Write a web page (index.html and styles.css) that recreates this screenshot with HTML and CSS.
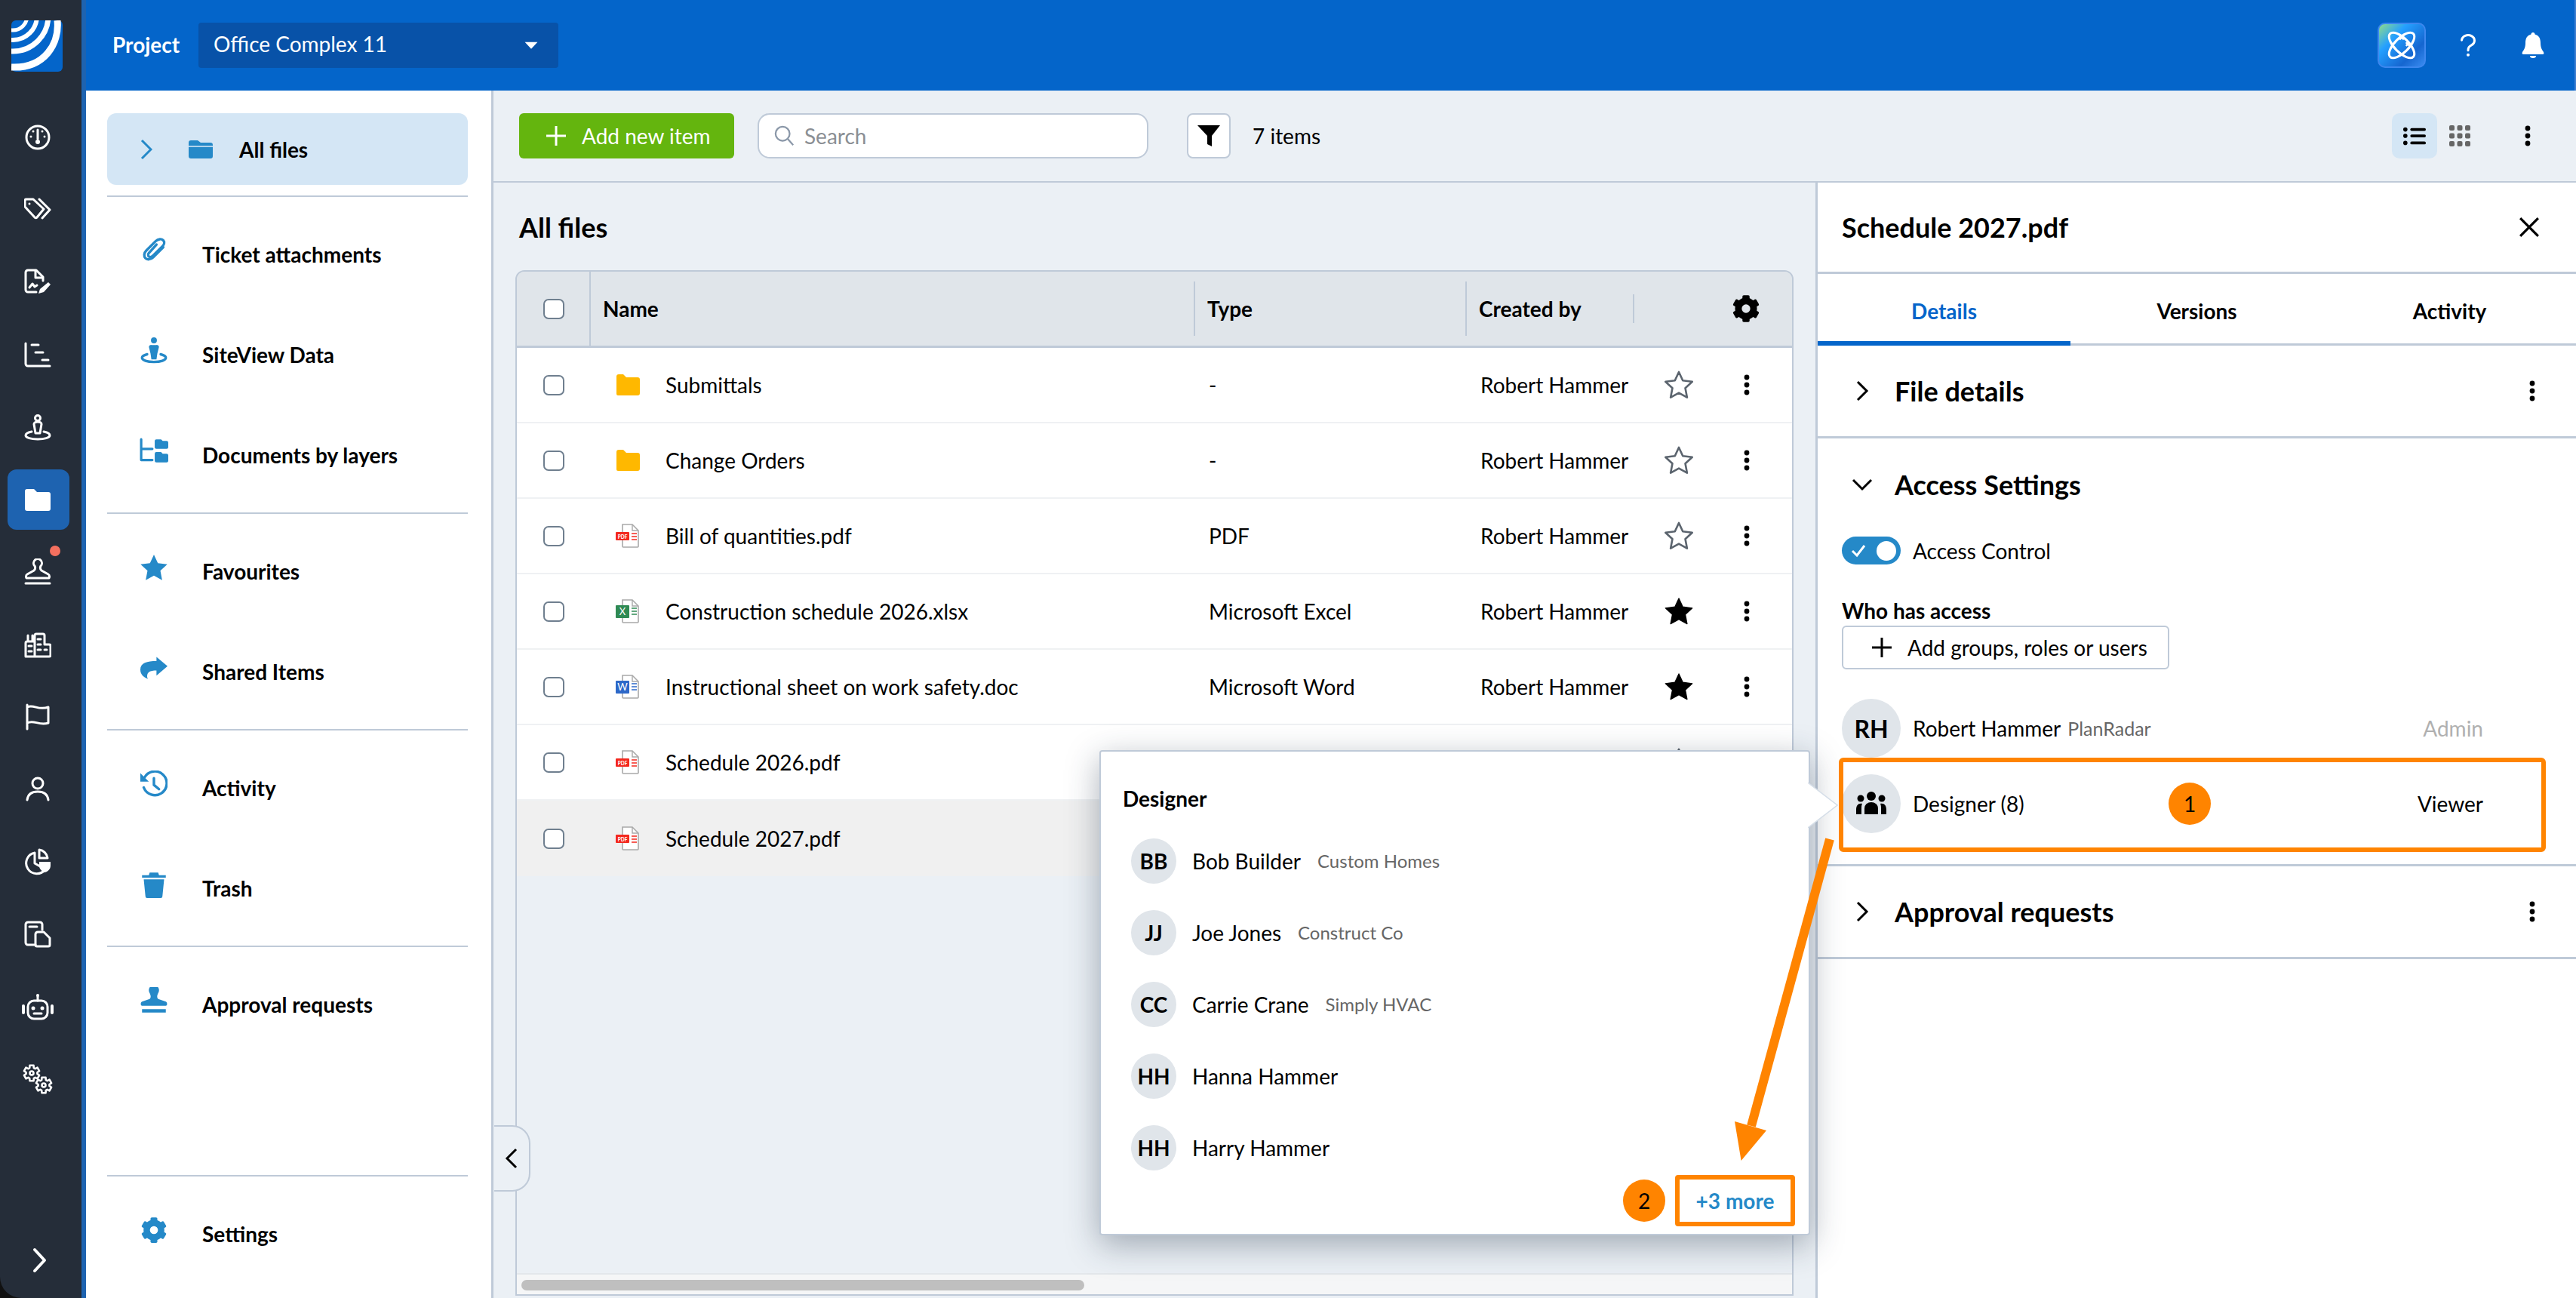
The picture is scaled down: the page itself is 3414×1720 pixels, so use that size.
FILE: index.html
```html
<!DOCTYPE html>
<html>
  <head>
    <title>All files</title>
    <meta name="viewport" content="width=device-width, initial-scale=1">
    <link rel="stylesheet" href="styles.css">
  </head>
  <body>
    <svg class="defs" width="0" height="0">
      <defs>
        <polygon id="gearline" points="-2.540,-10.190 2.540,-10.190 2.810,-6.950 4.620,-5.910 7.550,-7.290 10.090,-2.890 7.430,-1.040 7.430,1.040 10.090,2.890 7.550,7.290 4.620,5.910 2.810,6.950 2.540,10.190 -2.540,10.190 -2.810,6.950 -4.620,5.910 -7.550,7.290 -10.090,2.890 -7.430,1.040 -7.430,-1.040 -10.090,-2.890 -7.550,-7.290 -4.620,-5.910 -2.810,-6.950"/>
      </defs>
      <symbol id="star" viewBox="0 0 32 32"><polygon points="16,3 20,11.600 29.500,12.800 22.500,19.300 24.300,28.700 16,24.100 7.700,28.700 9.500,19.300 2.500,12.800 12,11.600" stroke-linejoin="round"/></symbol>
      <symbol id="kebab" viewBox="0 0 8 28"><circle cx="4" cy="4" r="3.400"/><circle cx="4" cy="14" r="3.400"/><circle cx="4" cy="24" r="3.400"/></symbol>
      <symbol id="folder" viewBox="0 0 32 28"><path d="M1 3a3 3 0 0 1 3-3h6l4 4h15a3 3 0 0 1 3 3v18a3 3 0 0 1-3 3H3a2 2 0 0 1-2-2z"/></symbol>
      <symbol id="page" viewBox="0 0 32 32"><path d="M9 1h13l8 8v21a1 1 0 0 1-1 1H10a1 1 0 0 1-1-1z" fill="#fff" stroke="#a9a9a9" stroke-width="1.600"/><path d="M22 1v8h8" fill="none" stroke="#a9a9a9" stroke-width="1.400"/></symbol>
      <symbol id="cog" viewBox="0 0 32 32">
        <circle cx="16" cy="16" r="8.500" fill="none" stroke="currentColor" stroke-width="7.500"/>
        <g fill="currentColor">
          <rect x="12" y="1" width="8" height="7" rx="1.500"/>
          <rect x="12" y="1" width="8" height="7" rx="1.500" transform="rotate(60 16 16)"/>
          <rect x="12" y="1" width="8" height="7" rx="1.500" transform="rotate(120 16 16)"/>
          <rect x="12" y="1" width="8" height="7" rx="1.500" transform="rotate(180 16 16)"/>
          <rect x="12" y="1" width="8" height="7" rx="1.500" transform="rotate(240 16 16)"/>
          <rect x="12" y="1" width="8" height="7" rx="1.500" transform="rotate(300 16 16)"/>
        </g>
      </symbol>
    </svg>

    <div class="app">
      <nav class="rail">
        <svg class="logo" viewBox="0 0 68 68">
          <rect width="68" height="68" rx="6" fill="#0465ca"/>
          <g fill="none" stroke="#fff">
            <circle cx="2" cy="-6" r="19" stroke-width="5"/>
            <circle cx="2" cy="-6" r="32" stroke-width="6"/>
            <circle cx="2" cy="-6" r="47" stroke-width="7"/>
            <path d="M61 0C64 30 45 64 0 62" stroke-width="9"/>
          </g>
        </svg>
        <div class="rail-list">
          <a class="rail-item"><svg viewBox="0 0 36 36"><circle cx="18" cy="18" r="15"/><path d="M18 8v12"/><circle cx="18" cy="24" r="3" class="fill"/><circle cx="9" cy="17" r="1.500" class="fill"/><circle cx="27" cy="17" r="1.500" class="fill"/><circle cx="12" cy="10" r="1.500" class="fill"/><circle cx="24" cy="10" r="1.500" class="fill"/></svg></a>
          <a class="rail-item"><svg viewBox="0 0 36 36"><path d="M1 6a2 2 0 0 1 2-2h9l14 13-9 11a2 2 0 0 1-3 0L2 15a3 3 0 0 1-1-2z"/><circle cx="7" cy="10" r="1.500" class="fill"/><path d="M20 4l14 14-10 11"/></svg></a>
          <a class="rail-item"><svg viewBox="0 0 36 36"><path d="M16 31H5a3 3 0 0 1-3-3V5a3 3 0 0 1 3-3h11l9 9v5"/><path d="M15 3v9h9"/><path d="M7 25l4-5 3 4 3-2"/><path d="M19 33l2-6 11-9 3 3-9 10z" class="fill"/></svg></a>
          <a class="rail-item"><svg viewBox="0 0 36 36"><path d="M2 3v27a3 3 0 0 0 3 3h29"/><path d="M10 5h9M15 15h10M24 25h8"/></svg></a>
          <a class="rail-item"><svg viewBox="0 0 36 36"><circle cx="18" cy="6" r="3.500"/><path d="M13 14a5 3 0 0 1 10 0l-2 12h-6z"/><path d="M10 24c-5 1-8 3-8 5 0 3 7 5 16 5s16-2 16-5c0-2-3-4-8-5"/></svg></a>
          <a class="rail-item active"><svg viewBox="0 0 36 36"><path class="fill" d="M1 7a3 3 0 0 1 3-3h9l4 4h15a3 3 0 0 1 3 3v19a3 3 0 0 1-3 3H4a3 3 0 0 1-3-3z"/></svg></a>
          <a class="rail-item has-dot"><svg viewBox="0 0 36 36"><path d="M13 16c2-2 2-4 1-6a5.500 5.500 0 1 1 8 0c-1 2-1 4 1 6l9 5c2 1 2 5 0 5H4c-2 0-2-4 0-5z"/><path d="M2 33h32"/></svg></a>
          <a class="rail-item"><svg viewBox="0 0 36 36"><path d="M2 34V16a2 2 0 0 1 2-2h10v20zM5 14V6M11 14V6M14 34V6a2 2 0 0 1 2-2h9a2 2 0 0 1 2 2v12h6a2 2 0 0 1 2 2v12a2 2 0 0 1-2 2z"/><path d="M6 20h4M6 27h4M18 11h4M18 18h4M18 25h4M27 25h3"/></svg></a>
          <a class="rail-item"><svg viewBox="0 0 36 36"><path d="M4 2v32M4 5c9-4 15 5 28 0v21c-13 4-19-5-28 0"/></svg></a>
          <a class="rail-item"><svg viewBox="0 0 36 36"><circle cx="18" cy="10" r="7"/><path d="M4 32c1-8 7-11 14-11s13 3 14 11"/></svg></a>
          <a class="rail-item"><svg viewBox="0 0 36 36"><path d="M14 6a14 14 0 1 0 14 22L14 20z"/><path d="M20 2a13 13 0 0 1 11 11H20z"/><path class="fill" d="M20 18h15v5c0 5-4 8-7.500 9-3.500-1-7.500-4-7.500-9z"/></svg></a>
          <a class="rail-item"><svg viewBox="0 0 36 36"><path d="M15 32H5a3 3 0 0 1-3-3V5a3 3 0 0 1 3-3h16a3 3 0 0 1 3 3v7"/><path d="M7 8h10"/><path d="M15 18a3 3 0 0 1 3-3h8l8 8v9a2 2 0 0 1-2 2H17a2 2 0 0 1-2-2z"/></svg></a>
          <a class="rail-item wide"><svg viewBox="0 0 44 36"><rect x="9" y="10" width="26" height="24" rx="8"/><path d="M22 4v6"/><circle cx="22" cy="3" r="2" class="fill"/><path d="M3 17v9M41 17v9" stroke-width="4"/><circle cx="16" cy="20" r="2.500" class="fill"/><circle cx="28" cy="20" r="2.500" class="fill"/><path d="M17 27h10"/></svg></a>
          <a class="rail-item gears"><svg viewBox="0 0 40 40"><use href="#gearline" transform="translate(12 12)"/><circle cx="12" cy="12" r="2.500"/><use href="#gearline" transform="translate(28 28)"/><circle cx="28" cy="28" r="2.500"/></svg></a>
          <a class="rail-item rail-expand"><svg viewBox="0 0 36 36"><path d="M11 4l13 14-13 14" stroke-width="4"/></svg></a>
        </div>
      </nav>

      <div class="workspace">
        <header class="topbar">
          <span class="project-label">Project</span>
          <div class="project-select">
            <span>Office Complex 11</span>
            <svg class="caret" viewBox="0 0 16 10"><path d="M1 1.500h14L8 9z"/></svg>
          </div>
          <div class="top-actions">
            <a class="ai-btn">
              <svg viewBox="0 0 36 36" fill="none" stroke="#fff" stroke-width="3.200">
                <ellipse cx="18" cy="18" rx="23" ry="10" transform="rotate(45 18 18)"/>
                <ellipse cx="18" cy="18" rx="23" ry="10" transform="rotate(-45 18 18)"/>
                <path d="M15 4l6 6M21 4l-6 6M24 14l5 5M29 14l-5 5" stroke-width="2.600"/>
              </svg>
            </a>
            <svg class="help" viewBox="0 0 26 36" fill="none" stroke="#fff" stroke-width="3.600" stroke-linecap="round"><path d="M3 10a10 8.500 0 1 1 15 8c-3 2-5 3-5 8"/><circle cx="13" cy="33" r="2.400" fill="#fff" stroke="none"/></svg>
            <svg class="bell" viewBox="0 0 30 34" fill="#fff"><path d="M15 0a2.500 2.500 0 0 1 2.500 2.500C23 4 25 8 25 14c0 6 2 9 4 12 1 2 0 3-1 3H2c-1 0-2-1-1-3 2-3 4-6 4-12C5 8 7 4 12.500 2.500A2.500 2.500 0 0 1 15 0z"/><path d="M11 31h8a4 3 0 0 1-8 0z"/></svg>
          </div>
        </header>

        <div class="below-top">
          <aside class="sidebar">
            <a class="side-item current">
              <svg class="side-chevron" viewBox="0 0 16 28"><path d="M2 2l12 12L2 26"/></svg>
              <svg class="side-folder" viewBox="0 0 32 24"><path d="M0 3a3 3 0 0 1 3-3h9l4 3h13a3 3 0 0 1 3 3v15a3 3 0 0 1-3 3H3a3 3 0 0 1-3-3z"/><path d="M0 8h32" stroke="#d4e6f5" stroke-width="1.600"/></svg>
              <span>All files</span>
            </a>
            <hr>
            <a class="side-item"><span class="side-icon"><svg viewBox="0 0 32 32"><path class="line" d="M27 12L15 24c-3 3-7 3-9 1s-2-6 1-9L18 5c3-3 7-3 9-1s1 5-1 7L15 22c-2 2-4 2-5 1s-1-3 0-4l9-10"/></svg></span><span>Ticket attachments</span></a>
            <a class="side-item"><span class="side-icon"><svg viewBox="0 0 32 32"><circle cx="16" cy="3.500" r="3.500"/><path d="M10 11a3 3 0 0 1 3-2h6a3 3 0 0 1 3 2l-2 8-1 7h-6l-1-7z"/><path class="line" d="M8 20c-4 1-6 2-6 4 0 3 6 5 14 5s14-2 14-5c0-2-2-3-6-4" stroke-width="2.400"/></svg></span><span>SiteView Data</span></a>
            <a class="side-item"><span class="side-icon docs"><svg viewBox="0 0 36 32"><path class="line" d="M2 1v26h14M2 13h14"/><path d="M19 3a2 2 0 0 1 2-2h6l2 2h5a2 2 0 0 1 2 2v6a2 2 0 0 1-2 2H21a2 2 0 0 1-2-2zM19 19a2 2 0 0 1 2-2h6l2 2h5a2 2 0 0 1 2 2v7a2 2 0 0 1-2 2H21a2 2 0 0 1-2-2z"/></svg></span><span>Documents by layers</span></a>
            <hr>
            <a class="side-item"><span class="side-icon star"><svg viewBox="0 0 32 32"><use href="#star"/></svg></span><span>Favourites</span></a>
            <a class="side-item"><span class="side-icon"><svg viewBox="0 0 32 32"><path d="M19 3l13 11-13 11v-6c-8 0-11 2-11 7 0 2 1 3 1 3-5-2-9-5-9-11 0-8 8-10 19-10z"/></svg></span><span>Shared Items</span></a>
            <hr>
            <a class="side-item"><span class="side-icon"><svg viewBox="0 0 32 32"><path class="line" d="M5 8a14 14 0 1 1-1 12" stroke-width="3.400"/><path d="M0 3l10 10H0z"/><path class="line" d="M16 9v8l6 5" stroke-width="3"/></svg></span><span>Activity</span></a>
            <a class="side-item"><span class="side-icon"><svg viewBox="0 0 32 32"><path d="M2 5h8l1-3h10l1 3h8v3H2zM4 10h24l-2 20a2 2 0 0 1-2 2H8a2 2 0 0 1-2-2z"/></svg></span><span>Trash</span></a>
            <hr>
            <a class="side-item"><span class="side-icon"><svg viewBox="0 0 32 32"><path d="M11 14c2-2 1-5 0-7a6 6 0 1 1 10 0c-1 2-2 5 0 7l9 3c2 1 2 5 0 5H2c-2 0-2-4 0-5z"/><rect x="2" y="26" width="28" height="4"/></svg></span><span>Approval requests</span></a>
            <hr class="push">
            <a class="side-item"><span class="side-icon"><svg class="blue-cog" viewBox="0 0 32 32"><use href="#cog"/></svg></span><span>Settings</span></a>
          </aside>

          <main class="main">
            <div class="toolbar">
              <button class="add-btn"><svg viewBox="0 0 28 28"><path d="M14 1v26M1 14h26"/></svg>Add new item</button>
              <div class="search">
                <svg viewBox="0 0 30 30"><circle cx="12" cy="12" r="10"/><path d="M19 19l8 9"/></svg>
                <span>Search</span>
              </div>
              <button class="filter-btn"><svg viewBox="0 0 32 32"><path d="M1 2h30L20 16v14l-6-3V16z"/></svg></button>
              <span class="count">7 items</span>
              <div class="view-btns">
                <a class="view-btn on"><svg viewBox="0 0 32 24"><g fill="#000"><circle cx="3" cy="3" r="3"/><circle cx="3" cy="12" r="3"/><circle cx="3" cy="22" r="3"/><rect x="10" y="1" width="22" height="4" rx="2"/><rect x="10" y="10" width="22" height="4" rx="2"/><rect x="10" y="20" width="22" height="4" rx="2"/></g></svg></a>
                <a class="view-btn"><svg viewBox="0 0 28 28"><g fill="#666"><rect width="7" height="7" rx="2"/><rect x="10.500" width="7" height="7" rx="2"/><rect x="21" width="7" height="7" rx="2"/><rect y="10.500" width="7" height="7" rx="2"/><rect x="10.500" y="10.500" width="7" height="7" rx="2"/><rect x="21" y="10.500" width="7" height="7" rx="2"/><rect y="21" width="7" height="7" rx="2"/><rect x="10.500" y="21" width="7" height="7" rx="2"/><rect x="21" y="21" width="7" height="7" rx="2"/></g></svg></a>
                <a class="view-btn more"><svg class="kebab" viewBox="0 0 8 28"><use href="#kebab"/></svg></a>
              </div>
            </div>

            <div class="content">
              <section class="files">
                <h1>All files</h1>
                <div class="table">
                  <div class="row head">
                    <div class="th-check"><span class="check"></span></div>
                    <div class="th">Name</div>
                    <div class="th ruled">Type</div>
                    <div class="th ruled">Created by</div>
                    <div class="th ruled cog-cell"><svg class="head-cog" viewBox="0 0 32 32"><use href="#cog"/></svg></div>
                  </div>

                  <div class="row">
                    <div class="td-check"><span class="check"></span></div>
                    <div class="td name"><svg class="ficon" viewBox="0 0 32 28"><use href="#folder" fill="#ffb800"/></svg>Submittals</div>
                    <div class="td">-</div>
                    <div class="td">Robert Hammer</div>
                    <div class="td-star"><svg class="star-off" viewBox="0 0 32 32"><use href="#star"/></svg></div>
                    <div class="td-more"><svg class="kebab" viewBox="0 0 8 28"><use href="#kebab"/></svg></div>
                  </div>
                  <div class="row">
                    <div class="td-check"><span class="check"></span></div>
                    <div class="td name"><svg class="ficon" viewBox="0 0 32 28"><use href="#folder" fill="#ffb800"/></svg>Change Orders</div>
                    <div class="td">-</div>
                    <div class="td">Robert Hammer</div>
                    <div class="td-star"><svg class="star-off" viewBox="0 0 32 32"><use href="#star"/></svg></div>
                    <div class="td-more"><svg class="kebab" viewBox="0 0 8 28"><use href="#kebab"/></svg></div>
                  </div>
                  <div class="row">
                    <div class="td-check"><span class="check"></span></div>
                    <div class="td name"><svg class="ficon tall" viewBox="0 0 32 32"><use href="#page"/><rect y="11" width="18" height="11" rx="1" fill="#f3281e"/><text x="9" y="19.500" class="ftext">PDF</text><path d="M21 13h7M21 17h7M21 21h7" stroke="#f3281e" stroke-width="1.400"/></svg>Bill of quantities.pdf</div>
                    <div class="td">PDF</div>
                    <div class="td">Robert Hammer</div>
                    <div class="td-star"><svg class="star-off" viewBox="0 0 32 32"><use href="#star"/></svg></div>
                    <div class="td-more"><svg class="kebab" viewBox="0 0 8 28"><use href="#kebab"/></svg></div>
                  </div>
                  <div class="row">
                    <div class="td-check"><span class="check"></span></div>
                    <div class="td name"><svg class="ficon tall" viewBox="0 0 32 32"><use href="#page"/><rect y="8" width="18" height="17" rx="1" fill="#2f8a54"/><text x="9" y="20.500" class="ftext big">X</text><path d="M21 12h7M21 16h7M21 20h7" stroke="#2f8a54" stroke-width="1.400"/></svg>Construction schedule 2026.xlsx</div>
                    <div class="td">Microsoft Excel</div>
                    <div class="td">Robert Hammer</div>
                    <div class="td-star"><svg class="star-on" viewBox="0 0 32 32"><use href="#star"/></svg></div>
                    <div class="td-more"><svg class="kebab" viewBox="0 0 8 28"><use href="#kebab"/></svg></div>
                  </div>
                  <div class="row">
                    <div class="td-check"><span class="check"></span></div>
                    <div class="td name"><svg class="ficon tall" viewBox="0 0 32 32"><use href="#page"/><rect y="8" width="18" height="17" rx="1" fill="#2d68c8"/><text x="9" y="20.500" class="ftext big">W</text><path d="M21 12h7M21 16h7M21 20h7" stroke="#2d68c8" stroke-width="1.400"/></svg>Instructional sheet on work safety.doc</div>
                    <div class="td">Microsoft Word</div>
                    <div class="td">Robert Hammer</div>
                    <div class="td-star"><svg class="star-on" viewBox="0 0 32 32"><use href="#star"/></svg></div>
                    <div class="td-more"><svg class="kebab" viewBox="0 0 8 28"><use href="#kebab"/></svg></div>
                  </div>
                  <div class="row">
                    <div class="td-check"><span class="check"></span></div>
                    <div class="td name"><svg class="ficon tall" viewBox="0 0 32 32"><use href="#page"/><rect y="11" width="18" height="11" rx="1" fill="#f3281e"/><text x="9" y="19.500" class="ftext">PDF</text><path d="M21 13h7M21 17h7M21 21h7" stroke="#f3281e" stroke-width="1.400"/></svg>Schedule 2026.pdf</div>
                    <div class="td">PDF</div>
                    <div class="td">Robert Hammer</div>
                    <div class="td-star"><svg class="star-off" viewBox="0 0 32 32"><use href="#star"/></svg></div>
                    <div class="td-more"><svg class="kebab" viewBox="0 0 8 28"><use href="#kebab"/></svg></div>
                  </div>
                  <div class="row selected">
                    <div class="td-check"><span class="check"></span></div>
                    <div class="td name"><svg class="ficon tall" viewBox="0 0 32 32"><use href="#page"/><rect y="11" width="18" height="11" rx="1" fill="#f3281e"/><text x="9" y="19.500" class="ftext">PDF</text><path d="M21 13h7M21 17h7M21 21h7" stroke="#f3281e" stroke-width="1.400"/></svg>Schedule 2027.pdf</div>
                    <div class="td">PDF</div>
                    <div class="td">Robert Hammer</div>
                    <div class="td-star"><svg class="star-off" viewBox="0 0 32 32"><use href="#star"/></svg></div>
                    <div class="td-more"><svg class="kebab" viewBox="0 0 8 28"><use href="#kebab"/></svg></div>
                  </div>

                  <div class="scroller"><div class="thumb"></div></div>
                </div>
                <a class="collapse"><svg viewBox="0 0 18 28"><path d="M15 2L3 14l12 12"/></svg></a>
              </section>

              <section class="panel">
                <div class="panel-head">
                  <h2>Schedule 2027.pdf</h2>
                  <svg class="close" viewBox="0 0 26 26"><path d="M2 2l22 22M24 2L2 24"/></svg>
                </div>
                <div class="tabs">
                  <a class="tab on">Details</a>
                  <a class="tab">Versions</a>
                  <a class="tab">Activity</a>
                </div>
                <div class="acc-head ruled-b">
                  <svg class="acc-chev" viewBox="0 0 18 28"><path d="M3 2l12 12L3 26"/></svg>
                  <h3>File details</h3>
                  <svg class="kebab" viewBox="0 0 8 28"><use href="#kebab"/></svg>
                </div>
                <div class="access ruled-b">
                  <div class="acc-head">
                    <svg class="acc-chev down" viewBox="0 0 28 18"><path d="M2 3l12 12L26 3"/></svg>
                    <h3>Access Settings</h3>
                  </div>
                  <div class="access-body">
                    <div class="toggle-row">
                      <span class="toggle"><svg viewBox="0 0 20 18"><path d="M2 9l6 6L18 2"/></svg><i></i></span>
                      <span>Access Control</span>
                    </div>
                    <div class="who">Who has access</div>
                    <button class="add-access"><svg viewBox="0 0 28 28"><path d="M14 1v26M1 14h26"/></svg>Add groups, roles or users</button>
                    <div class="person first">
                      <span class="avatar big">RH</span>
                      <span class="pname">Robert Hammer</span>
                      <span class="org">PlanRadar</span>
                      <span class="role muted">Admin</span>
                    </div>
                    <div class="person">
                      <span class="avatar big"><svg viewBox="0 0 40 32"><circle cx="20" cy="6" r="6"/><circle cx="6" cy="9" r="4.500"/><circle cx="34" cy="9" r="4.500"/><path d="M11 30V22a9 8 0 0 1 18 0v8z"/><path d="M0 30v-6c0-6 3-9 8-8-1 2-1 4-1 7v7zM40 30v-6c0-6-3-9-8-8 1 2 1 4 1 7v7z"/></svg></span>
                      <span class="pname">Designer (8)</span>
                      <span class="role">Viewer</span>
                    </div>
                  </div>
                </div>
                <div class="acc-head ruled-b">
                  <svg class="acc-chev" viewBox="0 0 18 28"><path d="M3 2l12 12L3 26"/></svg>
                  <h3>Approval requests</h3>
                  <svg class="kebab" viewBox="0 0 8 28"><use href="#kebab"/></svg>
                </div>
              </section>
            </div>
          </main>
        </div>
      </div>

      <div class="popover">
        <svg class="notch" viewBox="0 0 40 60"><polygon points="0,0 39,30 0,60" fill="#fff"/><path d="M0 0l39 30L0 60" fill="none" stroke="#d5dee8" stroke-width="1.500"/></svg>
        <div class="pop-title">Designer</div>
        <div class="pop-row"><span class="avatar">BB</span><span class="pname">Bob Builder</span><span class="org">Custom Homes</span></div>
        <div class="pop-row"><span class="avatar">JJ</span><span class="pname">Joe Jones</span><span class="org">Construct Co</span></div>
        <div class="pop-row"><span class="avatar">CC</span><span class="pname">Carrie Crane</span><span class="org">Simply HVAC</span></div>
        <div class="pop-row"><span class="avatar">HH</span><span class="pname">Hanna Hammer</span></div>
        <div class="pop-row"><span class="avatar">HH</span><span class="pname">Harry Hammer</span></div>
        <div class="pop-foot">
          <span class="badge">2</span>
          <a class="more-link">+3 more</a>
        </div>
      </div>

      <div class="callout-box"></div>
      <span class="badge badge-one">1</span>
      <svg class="callout-arrow" viewBox="0 0 150 440"><path d="M135 7L31 387" stroke="#ff8400" stroke-width="12"/><polygon points="9,381 51,393 17.600,433" fill="#ff8400"/></svg>
    </div>
  </body>
</html>
```

FILE: styles.css
```css
* { box-sizing: border-box; }

html, body {
  margin: 0;
  background: #111;
}

body {
  font-family: Lato, "Open Sans", sans-serif;
  font-size: 28px;
  color: #000;
}

a { display: block; }

button {
  font: inherit;
  color: inherit;
  background: none;
  border: 0;
  padding: 0;
}

h1, h2, h3 { margin: 0; font-weight: 700; }

.defs { position: absolute; }

.app {
  position: relative;
  display: flex;
  width: 3414px;
  height: 1720px;
  overflow: hidden;
}

/* left rail */

.rail {
  flex: none;
  width: 114px;
  padding: 27px 0 2px;
  display: flex;
  flex-direction: column;
  background: #252d39;
  border-right: 6px solid #1e63b0;
  border-bottom-left-radius: 28px;
}

.logo {
  width: 68px;
  height: 68px;
  margin-left: 15px;
  flex: none;
}

.rail-list {
  margin-top: 39px;
  flex: 1;
  display: flex;
  flex-direction: column;
}

.rail-item {
  position: relative;
  flex: none;
  width: 82px;
  height: 80px;
  margin: 8px 0 8px 10px;
  border-radius: 12px;
  display: flex;
  align-items: center;
  justify-content: center;
}

.rail-item svg {
  width: 36px;
  height: 36px;
  margin-left: -2px;
  fill: none;
  stroke: #fff;
  stroke-width: 3;
  stroke-linecap: round;
  stroke-linejoin: round;
}

.rail-item svg .fill { fill: #fff; stroke: none; }

.rail-item.active { background: #1e63b0; }

.rail-item.wide svg { width: 44px; }
.rail-item.gears svg { width: 40px; height: 40px; stroke-width: 2.600; }

.has-dot::after {
  content: '';
  position: absolute;
  left: 56px;
  top: 5px;
  width: 14px;
  height: 14px;
  border-radius: 50%;
  background: #f4705f;
}

.rail-expand { margin-top: auto; }
.rail-expand svg { margin-left: 4px; }

/* top bar */

.workspace {
  flex: 1;
  display: flex;
  flex-direction: column;
  min-width: 0;
}

.topbar {
  flex: none;
  height: 120px;
  padding: 0 34px 0 35px;
  display: flex;
  align-items: center;
  background: #0465ca;
  color: #fff;
  border-right: 2px solid #3f7fd0;
}

.project-label {
  width: 114px;
  padding-bottom: 3px;
  font-weight: 700;
}

.project-select {
  width: 477px;
  height: 60px;
  padding: 0 26px 0 20px;
  display: flex;
  align-items: center;
  justify-content: space-between;
  background: #0852a8;
  border-radius: 4px;
}

.project-select span { padding-bottom: 5px; }

.caret { width: 20px; height: 12px; fill: #fff; }

.top-actions {
  margin-left: auto;
  display: flex;
  align-items: center;
}

.ai-btn {
  width: 64px;
  height: 60px;
  border: 2px solid #3d87ee;
  border-radius: 10px;
  background: linear-gradient(135deg, #8fdc8a 0, #25a0ff 32%, #1566d0 72%, #3a8cf0 100%);
  display: flex;
  align-items: center;
  justify-content: center;
}

.ai-btn svg { width: 38px; height: 34px; overflow: visible; }

.help { width: 22px; height: 32px; margin-left: 45px; }
.bell { width: 30px; height: 34px; margin-left: 60px; margin-right: 6px; }

/* sidebar */

.below-top {
  flex: 1;
  display: flex;
  min-height: 0;
}

.sidebar {
  flex: none;
  width: 540px;
  padding: 30px 31px 18px 28px;
  display: flex;
  flex-direction: column;
  background: #fff;
  border-right: 3px solid #bfcad8;
}

.sidebar hr {
  width: 100%;
  height: 2px;
  flex: none;
  margin: 9px 0 10px;
  border: 0;
  background: #bfcad8;
}

.sidebar hr.push { margin-top: auto; }

.side-item {
  flex: none;
  height: 133px;
  padding: 0 0 2px 40px;
  display: flex;
  align-items: center;
  gap: 42px;
  font-weight: 700;
}

.side-item.current {
  height: 95px;
  margin-bottom: 5px;
  padding: 0 0 0 44px;
  gap: 0;
  background: #d4e6f5;
  border-radius: 12px;
}

.side-chevron {
  width: 16px;
  height: 28px;
  fill: none;
  stroke: #2589c8;
  stroke-width: 3;
}

.side-folder { width: 32px; height: 24px; margin: 0 35px 0 48px; fill: #2589c8; }

.side-icon {
  width: 44px;
  height: 44px;
  margin-top: -10px;
  display: flex;
  align-items: center;
  justify-content: center;
}

.side-icon svg { width: 36px; height: 36px; fill: #2589c8; }
.side-icon.docs svg { width: 38px; }
.side-icon.star svg { width: 42px; height: 42px; }
.side-icon .blue-cog { color: #2589c8; }

.side-icon .line {
  fill: none;
  stroke: #2589c8;
  stroke-width: 3;
  stroke-linecap: round;
  stroke-linejoin: round;
}

/* toolbar */

.main {
  flex: 1;
  min-width: 0;
  display: flex;
  flex-direction: column;
  background: #ebf0f5;
}

.toolbar {
  flex: none;
  height: 122px;
  padding: 0 34px;
  display: flex;
  align-items: center;
  border-bottom: 2px solid #bfcad8;
}

.add-btn {
  width: 285px;
  height: 60px;
  padding-left: 35px;
  display: flex;
  align-items: center;
  gap: 20px;
  color: #fff;
  background: #64b50e;
  border-radius: 6px;
}

.add-btn svg { width: 28px; height: 28px; stroke: #fff; stroke-width: 3; }

.search {
  width: 518px;
  height: 60px;
  margin-left: 31px;
  padding-left: 20px;
  display: flex;
  align-items: center;
  gap: 12px;
  color: #8b8f94;
  background: #fff;
  border: 2px solid #bfcad8;
  border-radius: 16px;
}

.search svg {
  width: 28px;
  height: 28px;
  fill: none;
  stroke: #8a97a8;
  stroke-width: 2.400;
}

.filter-btn {
  width: 58px;
  height: 60px;
  margin-left: 51px;
  display: flex;
  align-items: center;
  justify-content: center;
  background: #fff;
  border: 2px solid #bfcad8;
  border-radius: 8px;
}

.filter-btn svg { width: 32px; height: 32px; }

.count { margin-left: 29px; }

.view-btns {
  margin-left: auto;
  display: flex;
  align-items: center;
}

.view-btn {
  width: 60px;
  height: 60px;
  display: flex;
  align-items: center;
  justify-content: center;
  border-radius: 10px;
}

.view-btn.on { background: #d4e6f5; }
.view-btn svg { width: 30px; height: 28px; }
.view-btn.more { margin-left: 30px; }

.kebab, .view-btn svg.kebab { width: 8px; height: 28px; flex: none; }

/* file table */

.content {
  flex: 1;
  min-height: 0;
  display: flex;
}

.files {
  position: relative;
  flex: none;
  width: 1752px;
  padding: 0 29px 3px;
  display: flex;
  flex-direction: column;
}

h1 {
  flex: none;
  height: 116px;
  padding-left: 5px;
  font-size: 36px;
  line-height: 118px;
}

.table {
  flex: 1;
  min-height: 0;
  display: flex;
  flex-direction: column;
  border: 2px solid #bfcad8;
  border-radius: 12px 12px 0 0;
  overflow: hidden;
}

.row {
  flex: none;
  height: 100px;
  display: grid;
  grid-template-columns: 98px 799px 360px 222px 122px 58px 1fr;
  align-items: center;
  background: #fff;
  border-bottom: 2px solid #eff1f3;
}

.row.head {
  height: 101px;
  grid-template-columns: 98px 799px 360px 222px 1fr;
  background: #e0e5ea;
  border-bottom: 3px solid #bfcad8;
  font-weight: 700;
}

.row.selected { background: #f0f0f0; border-bottom: 0; }

.th-check {
  align-self: stretch;
  display: flex;
  align-items: center;
  padding-left: 35px;
  border-right: 2px solid #bfcad8;
}

.td-check { padding-left: 35px; display: flex; }

.check {
  display: block;
  width: 28px;
  height: 27px;
  background: #fff;
  border: 2px solid #6f7f8f;
  border-radius: 7px;
}

.th { padding-left: 16px; line-height: 72px; }
.th.ruled { border-left: 2px solid #bfcad8; }

.cog-cell { display: flex; align-items: center; padding-left: 129px; }
.head-cog { width: 38px; height: 38px; color: #000; }

.td { padding-left: 20px; }

.td.name {
  padding-left: 33px;
  display: flex;
  align-items: center;
  gap: 34px;
}

.ficon { width: 32px; height: 28px; flex: none; }
.ficon.tall { height: 32px; }

.ftext {
  font-size: 6.500px;
  font-weight: 700;
  fill: #fff;
  text-anchor: middle;
}

.ftext.big { font-size: 13px; font-weight: 400; }

.td-star { text-align: center; line-height: 0; padding-right: 1px; }
.td-star svg { width: 42px; height: 42px; }

.star-off { fill: none; stroke: #5b646e; stroke-width: 2; }
.star-on { fill: #000; stroke: #000; stroke-width: 1; }

.td-more { line-height: 0; text-align: center; }

.scroller {
  margin-top: auto;
  flex: none;
  height: 28px;
  padding: 7px 0 5px 6px;
  background: #f5f6f7;
  border-top: 2px solid #e3e7eb;
}

.thumb {
  width: 746px;
  height: 14px;
  border-radius: 7px;
  background: #bfbfbf;
}

.collapse {
  position: absolute;
  left: 1px;
  top: 1249px;
  width: 48px;
  height: 88px;
  display: flex;
  align-items: center;
  justify-content: center;
  background: #ebf0f5;
  border: 2px solid #bfcad8;
  border-left: 0;
  border-radius: 0 24px 24px 0;
}

.collapse svg {
  width: 18px;
  height: 28px;
  fill: none;
  stroke: #000;
  stroke-width: 3;
}

/* details panel */

.panel {
  flex: 1;
  min-width: 0;
  background: #fff;
  border-left: 3px solid #bfcad8;
}

.panel-head {
  height: 121px;
  padding: 0 48px 0 32px;
  display: flex;
  align-items: center;
  justify-content: space-between;
  border-bottom: 3px solid #bfcad8;
}

h2 { font-size: 36px; }

.close {
  width: 28px;
  height: 28px;
  fill: none;
  stroke: #000;
  stroke-width: 3;
}

.tabs {
  height: 95px;
  display: grid;
  grid-template-columns: repeat(3, 335px);
  border-bottom: 3px solid #bfcad8;
}

.tab {
  height: 95px;
  padding-top: 32px;
  text-align: center;
  font-weight: 700;
}

.tab.on {
  color: #0465ca;
  border-bottom: 6px solid #0465ca;
}

.acc-head {
  height: 123px;
  padding: 0 54px 0 32px;
  display: flex;
  align-items: center;
}

.access > .acc-head { height: 122px; }

.ruled-b { border-bottom: 3px solid #bfcad8; }

.acc-chev {
  width: 54px;
  height: 28px;
  margin-right: 16px;
  fill: none;
  stroke: #000;
  stroke-width: 3;
}

.acc-chev.down { height: 18px; }

h3 { flex: 1; font-size: 36px; }

.access-body { padding: 8px 123px 41px 32px; }

.toggle-row {
  height: 37px;
  display: flex;
  align-items: center;
  gap: 16px;
}

.toggle {
  width: 78px;
  height: 37px;
  padding: 0 6px 0 12px;
  display: flex;
  align-items: center;
  justify-content: space-between;
  background: #2589c8;
  border-radius: 19px;
}

.toggle svg {
  width: 20px;
  height: 18px;
  fill: none;
  stroke: #fff;
  stroke-width: 3;
}

.toggle i {
  display: block;
  width: 26px;
  height: 26px;
  border-radius: 50%;
  background: #fff;
}

.who {
  margin-top: 44px;
  height: 34px;
  line-height: 34px;
  font-weight: 700;
}

.add-access {
  width: 434px;
  height: 58px;
  margin-top: 3px;
  padding-left: 37px;
  display: flex;
  align-items: center;
  gap: 20px;
  background: #fff;
  border: 2px solid #bfcad8;
  border-radius: 6px;
}

.add-access svg { width: 28px; height: 28px; stroke: #000; stroke-width: 3; }

.person {
  height: 78px;
  margin-top: 22px;
  display: flex;
  align-items: center;
}

.person.first { margin-top: 39px; }

.avatar {
  flex: none;
  width: 60px;
  height: 60px;
  display: flex;
  align-items: center;
  justify-content: center;
  border-radius: 50%;
  background: #e0e5ea;
  font-weight: 700;
}

.avatar.big { width: 78px; height: 78px; margin-right: 16px; font-size: 32px; }
.avatar.big svg { width: 40px; height: 32px; }

.org {
  margin-left: 16px;
  font-size: 24px;
  color: #666;
}

.person .org { margin-left: 9px; font-size: 25px; }

.role { margin-left: auto; }
.role.muted { color: #b0b0b0; }

/* popover and callouts, they lie over the page */

.popover {
  position: absolute;
  left: 1457px;
  top: 994px;
  width: 942px;
  height: 643px;
  background: #fff;
  border: 2px solid #bfcad8;
  border-radius: 4px;
  box-shadow: 0 12px 44px rgba(35, 50, 70, .38);
}

.notch {
  position: absolute;
  left: 100%;
  top: 41px;
  width: 40px;
  height: 60px;
  margin-left: -1px;
}

.pop-title {
  margin: 42px 0 15px 29px;
  line-height: 40px;
  font-weight: 700;
}

.pop-row {
  height: 95px;
  padding-left: 40px;
  display: flex;
  align-items: center;
  gap: 21px;
}

.pop-row .org { margin-left: 1px; }

.pop-foot {
  margin-top: -11px;
  padding-right: 18px;
  display: flex;
  align-items: center;
  justify-content: flex-end;
  gap: 13px;
}

.more-link {
  width: 159px;
  height: 68px;
  line-height: 56px;
  text-align: center;
  font-weight: 700;
  font-size: 28px;
  color: #2589c8;
  border: 6px solid #ff8400;
  border-radius: 4px;
}

.badge {
  width: 56px;
  height: 56px;
  line-height: 56px;
  text-align: center;
  border-radius: 50%;
  background: #ff8400;
}

.badge-one {
  position: absolute;
  left: 2874px;
  top: 1037px;
}

.callout-box {
  position: absolute;
  left: 2437px;
  top: 1004px;
  width: 937px;
  height: 125px;
  border: 6px solid #ff8400;
  border-radius: 6px;
}

.callout-arrow {
  position: absolute;
  left: 2290px;
  top: 1105px;
  width: 150px;
  height: 440px;
}
```
